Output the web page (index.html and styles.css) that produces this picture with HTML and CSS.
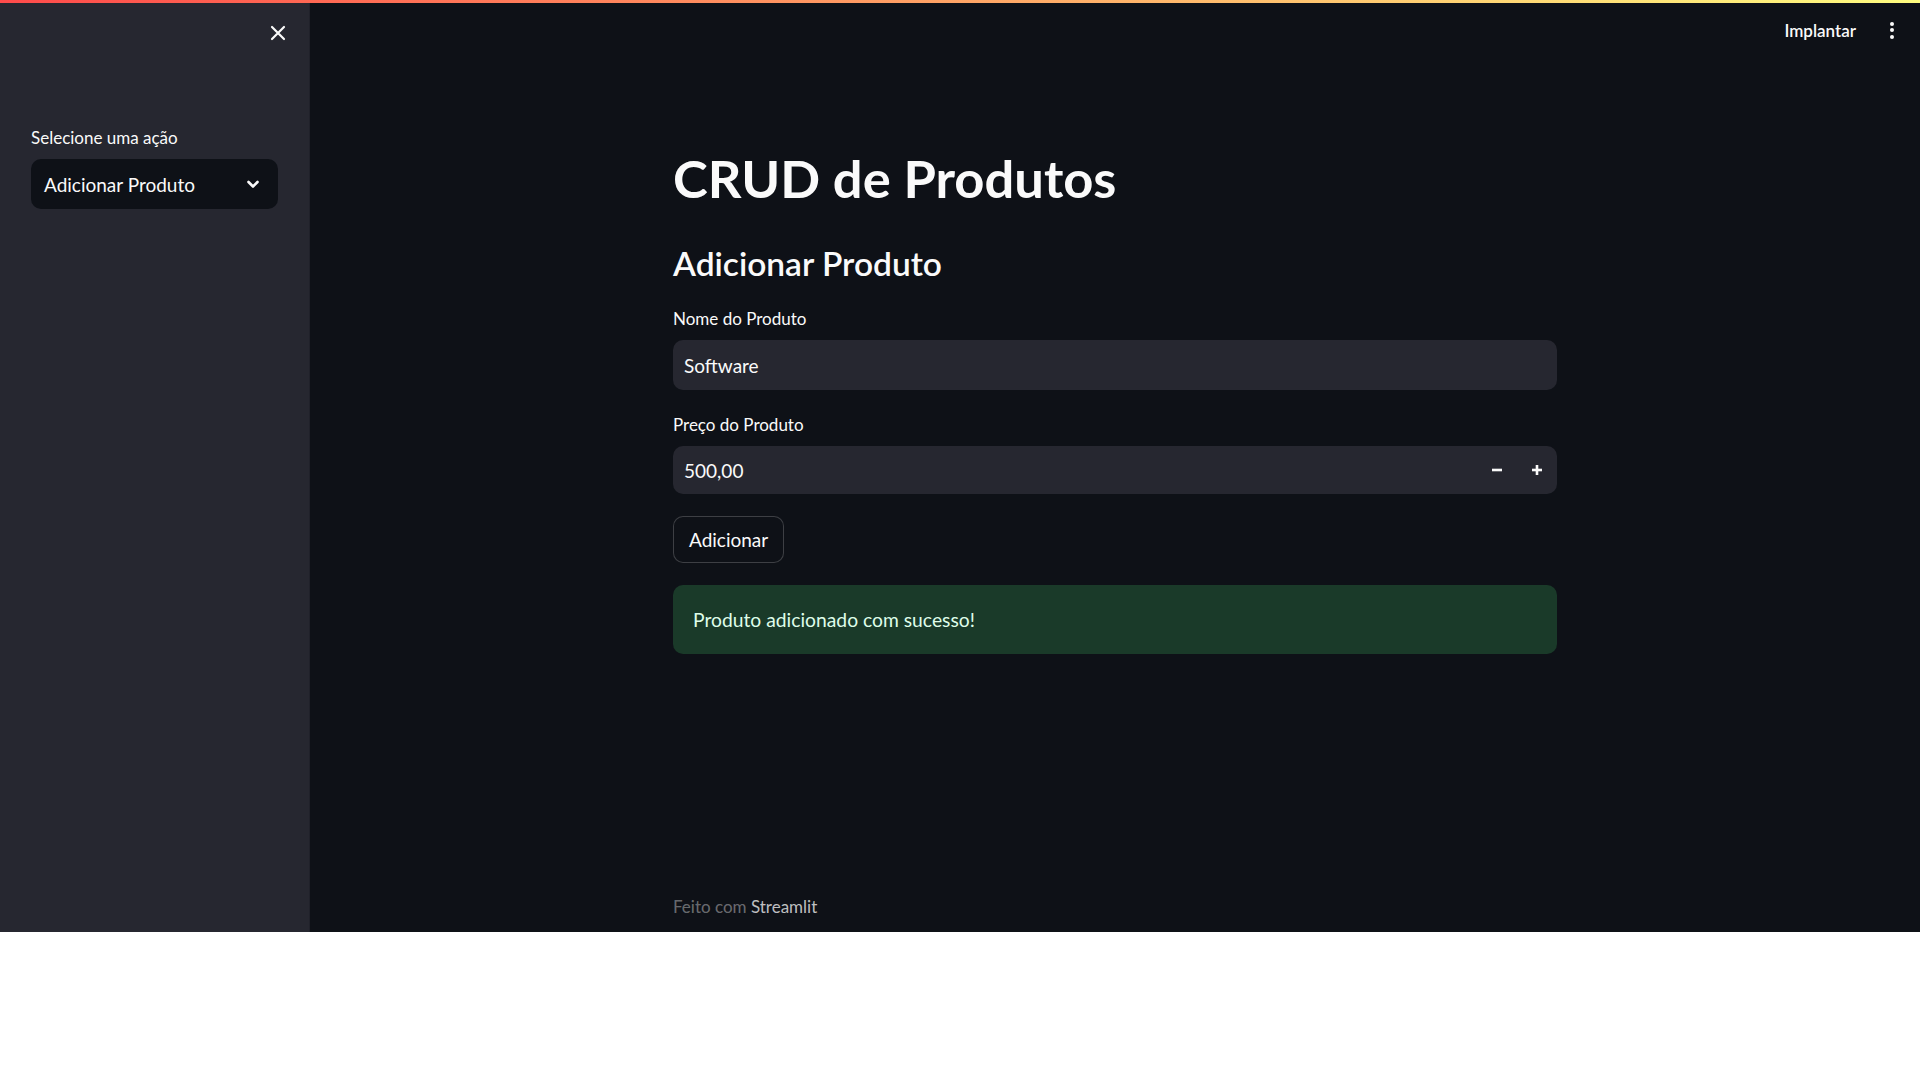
FILE: index.html
```html
<!DOCTYPE html>
<html lang="pt">
<head>
<meta charset="utf-8">
<title>CRUD de Produtos</title>
<link rel="stylesheet" href="styles.css">
</head>
<body>
<div class="app">
  <div class="decoration"></div>
  <aside class="sidebar">
    <div class="sidebar-top">
      <button class="icon-btn close-btn" aria-label="Fechar">
        <svg width="16" height="16" viewBox="0 0 16 16"><path d="M2 2 L14 14 M14 2 L2 14" stroke="#fafafa" stroke-width="2.2" stroke-linecap="round" fill="none"/></svg>
      </button>
    </div>
    <div class="field">
      <label class="label">Selecione uma ação</label>
      <div class="select">
        <span>Adicionar Produto</span>
        <svg class="chev" width="16" height="16" viewBox="0 0 16 16"><path d="M3.5 6 L8 10.5 L12.5 6" stroke="#fafafa" stroke-width="2.6" stroke-linecap="round" stroke-linejoin="round" fill="none"/></svg>
      </div>
    </div>
  </aside>
  <main class="main">
    <header class="topbar">
      <span class="deploy">Implantar</span>
      <span class="kebab"><i></i><i></i><i></i></span>
    </header>
    <section class="block">
      <h1 class="title">CRUD de Produtos</h1>
      <h3 class="subtitle">Adicionar Produto</h3>
      <div class="field">
        <label class="label">Nome do Produto</label>
        <div class="input">Software</div>
      </div>
      <div class="field field-gap">
        <label class="label">Preço do Produto</label>
        <div class="input number">
          <span class="value">500,00</span>
          <span class="step"><svg width="12" height="12" viewBox="0 0 12 12"><rect x="1" y="4.7" width="10" height="2.6" fill="#fafafa"/></svg></span>
          <span class="step"><svg width="12" height="12" viewBox="0 0 12 12"><rect x="1" y="4.7" width="10" height="2.6" fill="#fafafa"/><rect x="4.7" y="1" width="2.6" height="10" fill="#fafafa"/></svg></span>
        </div>
      </div>
      <button class="btn">Adicionar</button>
      <div class="success">Produto adicionado com sucesso!</div>
    </section>
    <footer class="footer">Feito com <span class="brand">Streamlit</span></footer>
  </main>
</div>
</body>
</html>
```
FILE: styles.css
```css
* { box-sizing: border-box; }
body {
  margin: 0;
  background: #ffffff;
  font-family: "Source Sans Pro", Lato, "Noto Sans", sans-serif;
  color: #fafafa;
}
.app {
  position: relative;
  display: flex;
  height: 932px;
  background: #0e1117;
}
.decoration {
  position: absolute;
  top: 0; left: 0; right: 0;
  height: 3px;
  background: linear-gradient(90deg, #ff4b4b, #fffd80);
  z-index: 2;
}
.sidebar {
  width: 310px;
  flex: none;
  background: #262730;
  padding: 0 31px;
  border-right: 1px solid #20212a;
}
.sidebar-top {
  height: 66px;
  display: flex;
  justify-content: flex-end;
  align-items: center;
  margin-right: -16px;
  margin-bottom: 61px;
}
.icon-btn {
  background: none;
  border: 0;
  padding: 0;
  width: 32px;
  height: 32px;
  display: flex;
  align-items: center;
  justify-content: center;
}
.label {
  display: block;
  font-size: 17px;
  line-height: 22px;
  margin-bottom: 10px;
  color: #fafafa;
}
.select {
  height: 50px;
  background: #0e1117;
  border-radius: 10px;
  display: flex;
  align-items: center;
  justify-content: space-between;
  padding: 0 17px 0 13px;
  font-size: 19px;
}
.main {
  flex: 1;
  display: flex;
  flex-direction: column;
  min-width: 0;
}
.topbar {
  height: 60px;
  display: flex;
  align-items: center;
  justify-content: flex-end;
  padding-right: 26px;
  gap: 34px;
}
.deploy {
  font-size: 17px;
  font-weight: 600;
}
.kebab {
  display: flex;
  flex-direction: column;
  gap: 2.5px;
  width: 4px;
}
.kebab i {
  display: block;
  width: 4px;
  height: 4px;
  border-radius: 50%;
  background: #fafafa;
}
.block {
  width: 884px;
  margin: 0 auto;
  padding-top: 85px;
}
.title {
  margin: 0;
  font-size: 52.5px;
  line-height: 66px;
  font-weight: 700;
}
.subtitle {
  margin: 32px 0 25px;
  font-size: 33.5px;
  line-height: 40px;
  font-weight: 600;
}
.field-gap { margin-top: 24px; }
.input {
  height: 50px;
  background: #262730;
  border-radius: 10px;
  display: flex;
  align-items: center;
  padding-left: 11px;
  font-size: 19px;
}
.input.number {
  height: 48px;
  padding-right: 0;
}
.input .value { flex: 1; }
.step {
  width: 40px;
  height: 48px;
  display: flex;
  align-items: center;
  justify-content: center;
}
.btn {
  margin-top: 22px;
  height: 47px;
  padding: 0 15px;
  background: #0e1117;
  border: 1px solid rgba(250, 250, 250, 0.2);
  border-radius: 10px;
  color: #fafafa;
  font-family: inherit;
  font-size: 19px;
}
.success {
  margin-top: 22px;
  height: 69px;
  background: #1a3a29;
  border-radius: 10px;
  display: flex;
  align-items: center;
  padding-left: 20px;
  font-size: 19.3px;
  color: #dffde9;
}
.footer {
  margin: auto auto 0;
  width: 884px;
  padding-bottom: 15px;
  font-size: 17px;
  line-height: 20px;
  color: rgba(250, 250, 250, 0.4);
}
.brand { color: rgba(250, 250, 250, 0.75); }
```
